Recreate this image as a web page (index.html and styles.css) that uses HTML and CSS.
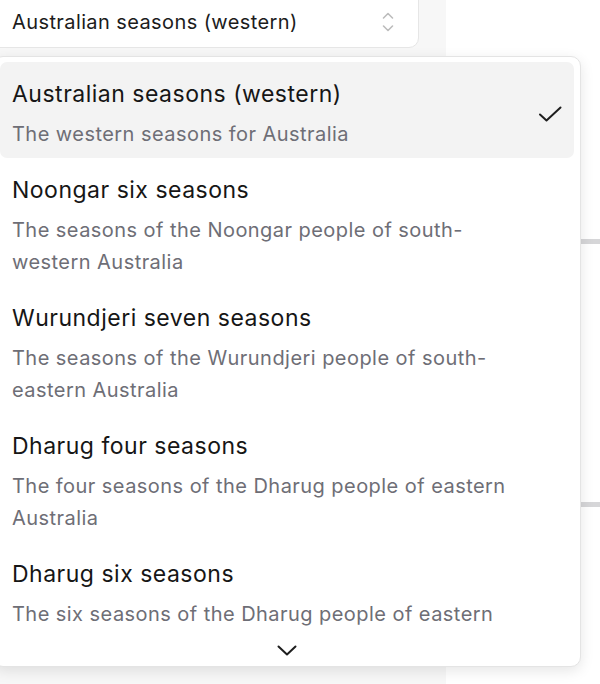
FILE: index.html
```html
<!DOCTYPE html>
<html lang="en">
<head>
<meta charset="utf-8">
<title>Season picker</title>
<link rel="stylesheet" href="styles.css">
</head>
<body>
<div class="page">
  <aside class="side">
    <button class="select" type="button">
      <span class="select-label">Australian seasons (western)</span>
      <svg class="select-icon" width="12" height="22" viewBox="0 0 12 22" aria-hidden="true">
        <polyline points="1.5,7 6,2.5 10.5,7" />
        <polyline points="1.5,15 6,19.5 10.5,15" />
      </svg>
    </button>
  </aside>
  <main class="main">
    <div class="track track-a"></div>
    <div class="track track-b"></div>
  </main>
</div>

<div class="menu" role="listbox">
  <div class="menu-list">
    <div class="option selected" role="option" aria-selected="true">
      <div class="option-text">
        <div class="option-title">Australian seasons (western)</div>
        <div class="option-desc">The western seasons for Australia</div>
      </div>
      <svg class="check" width="24" height="16" viewBox="0 0 24 16" aria-hidden="true">
        <polyline points="2,8.5 8.5,14.5 22.5,1.5" />
      </svg>
    </div>
    <div class="option" role="option">
      <div class="option-text">
        <div class="option-title">Noongar six seasons</div>
        <div class="option-desc">The seasons of the Noongar people of south-western Australia</div>
      </div>
    </div>
    <div class="option" role="option">
      <div class="option-text">
        <div class="option-title">Wurundjeri seven seasons</div>
        <div class="option-desc">The seasons of the Wurundjeri people of south-eastern Australia</div>
      </div>
    </div>
    <div class="option" role="option">
      <div class="option-text">
        <div class="option-title">Dharug four seasons</div>
        <div class="option-desc">The four seasons of the Dharug people of eastern Australia</div>
      </div>
    </div>
    <div class="option" role="option">
      <div class="option-text">
        <div class="option-title">Dharug six seasons</div>
        <div class="option-desc">The six seasons of the Dharug people of eastern Australia</div>
      </div>
    </div>
  </div>
  <div class="menu-footer">
    <svg class="chev" width="20" height="11" viewBox="0 0 20 11" aria-hidden="true">
      <polyline points="1.5,1.5 10,9.5 18.5,1.5" />
    </svg>
  </div>
</div>
</body>
</html>
```

FILE: styles.css
```css
* { box-sizing: border-box; }

html, body {
  margin: 0;
  padding: 0;
  height: 100%;
  overflow: hidden;
  background: #ffffff;
  font-family: "Inter", "Noto Sans", sans-serif;
}

.page {
  display: flex;
  height: 684px;
}

.side {
  width: 446px;
  flex: none;
  background: #f7f7f7;
}

.select {
  display: flex;
  align-items: center;
  justify-content: space-between;
  width: 430px;
  height: 64px;
  margin: -16px 0 0 -11px;
  padding: 11px 24px 0 22px;
  background: #ffffff;
  border: 1px solid #e6e6e6;
  border-radius: 10px;
  font: inherit;
  font-size: 20px;
  letter-spacing: 0.4px;
  color: #1c1c1c;
  text-align: left;
}

.select-icon {
  fill: none;
  stroke: #bcbcbc;
  stroke-width: 1.6;
  stroke-linecap: round;
  stroke-linejoin: round;
}

.main {
  flex: 1;
  display: flex;
  flex-direction: column;
  padding-top: 239px;
}

.track {
  height: 5px;
  background: #d6d6d8;
  margin-left: 20px;
}

.track-b { margin-top: 258px; }

.menu {
  position: absolute;
  left: -7px;
  top: 56px;
  width: 588px;
  height: 611px;
  background: #ffffff;
  border: 1px solid #e4e4e4;
  border-radius: 10px;
  box-shadow: 0 4px 14px rgba(0, 0, 0, 0.10);
  padding: 5px 6px 0 6px;
  display: flex;
  flex-direction: column;
}

.menu-list {
  height: 568px;
  overflow: hidden;
  flex: none;
}

.option {
  display: flex;
  align-items: center;
  padding: 16px 12px 8px 12px;
  border-radius: 7px;
}

.option.selected { background: #f3f3f3; }

.option-text {
  flex: 1;
  max-width: 513px;
}

.option-title {
  font-size: 23px;
  line-height: 32px;
  letter-spacing: 0.5px;
  color: #161616;
  margin-bottom: 8px;
}

.option-desc {
  font-size: 20px;
  line-height: 32px;
  letter-spacing: 0.45px;
  color: #6e6e76;
}

.check {
  margin: 0 0 0 auto;
  fill: none;
  stroke: #1e1e1e;
  stroke-width: 2;
  stroke-linecap: round;
  stroke-linejoin: round;
}

.menu-footer {
  flex: 1;
  display: flex;
  justify-content: center;
  padding-top: 15px;
}

.chev {
  fill: none;
  stroke: #1e1e1e;
  stroke-width: 2;
  stroke-linecap: round;
  stroke-linejoin: round;
}
```
